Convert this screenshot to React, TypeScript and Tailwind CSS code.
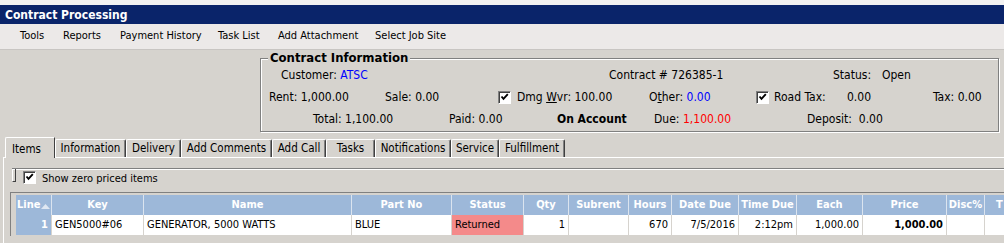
import type { ReactNode } from 'react';

const menu = [
  { label: 'Tools', w: 43 },
  { label: 'Reports', w: 57 },
  { label: 'Payment History', w: 98 },
  { label: 'Task List', w: 60 },
  { label: 'Add Attachment', w: 97 },
  { label: 'Select Job Site', w: 100 },
];

const tabs = [
  { label: 'Items', w: 50 },
  { label: 'Information', w: 71 },
  { label: 'Delivery', w: 55 },
  { label: 'Add Comments', w: 91 },
  { label: 'Add Call', w: 54 },
  { label: 'Tasks', w: 49 },
  { label: 'Notifications', w: 76 },
  { label: 'Service', w: 48 },
  { label: 'Fulfillment', w: 66 },
];

type Col = { label: string; w: number; align: 'left' | 'right' };

const cols: Col[] = [
  { label: 'Line', w: 36, align: 'right' },
  { label: 'Key', w: 92, align: 'left' },
  { label: 'Name', w: 208, align: 'left' },
  { label: 'Part No', w: 100, align: 'left' },
  { label: 'Status', w: 72, align: 'left' },
  { label: 'Qty', w: 45, align: 'right' },
  { label: 'Subrent', w: 60, align: 'right' },
  { label: 'Hours', w: 43, align: 'right' },
  { label: 'Date Due', w: 67, align: 'right' },
  { label: 'Time Due', w: 58, align: 'right' },
  { label: 'Each', w: 66, align: 'right' },
  { label: 'Price', w: 84, align: 'right' },
  { label: 'Disc%', w: 38, align: 'right' },
  { label: 'T', w: 40, align: 'right' },
];

const row = ['1', 'GEN5000#06', 'GENERATOR, 5000 WATTS', 'BLUE', 'Returned', '1', '', '670', '7/5/2016', '2:12pm', '1,000.00', '1,000.00', '', ''];

function CheckBox() {
  return (
    <span className="inline-flex h-[13px] w-[13px] shrink-0 items-center justify-center border border-t-[#808080] border-l-[#808080] border-r-white border-b-white bg-white shadow-[inset_1px_1px_0_#404040]">
      <svg width="9" height="9" viewBox="0 0 9 9">
        <path d="M1.5 3.5 L3.5 5.8 L7.8 1.2" stroke="#000" strokeWidth="1.9" fill="none" />
      </svg>
    </span>
  );
}

function Cell({ w, children, className = '' }: { w: number; children: ReactNode; className?: string }) {
  return (
    <span className={`shrink-0 whitespace-nowrap ${className}`} style={{ width: w }}>
      {children}
    </span>
  );
}

export default function App() {
  return (
    <div className="h-[243px] w-[1004px] overflow-hidden bg-[#d6d3ce] font-['DejaVu_Sans_Condensed','Liberation_Sans',sans-serif] text-black">
      <div className="h-[5px] bg-[#f2f2f2]" />
      {/* title bar */}
      <div className="flex h-[19px] items-center bg-[#0a246a] pl-[5px] text-[12px] font-bold text-white">
        Contract Processing
      </div>
      {/* menu */}
      <div className="flex h-[26px] items-center border-b border-[#c8c5c2] bg-[#ece9e8] pl-[20px] text-[11px]">
        {menu.map((m) => (
          <span key={m.label} className="shrink-0 whitespace-nowrap" style={{ width: m.w }}>
            {m.label}
          </span>
        ))}
      </div>

      {/* contract information group */}
      <div className="relative ml-[260px] mt-[8px] h-[74px] w-[739px] border border-[#808080] pt-[8px] text-[12px] shadow-[inset_1px_1px_0_#fff,1px_1px_0_#fff]">
        <span className="absolute -top-[9px] left-[7px] bg-[#d6d3ce] px-[2px] text-[13px] font-bold leading-[16px]">
          Contract Information
        </span>
        <div className="flex flex-col gap-[6px]">
          <div className="flex h-[16px] items-center pl-[20px] leading-[16px]">
            <Cell w={328}>
              Customer: <span className="text-[#0000ff]">ATSC</span>
            </Cell>
            <Cell w={224}>Contract # 726385-1</Cell>
            <Cell w={49}>Status:</Cell>
            <span>Open</span>
          </div>
          <div className="flex h-[16px] items-center pl-[8px] leading-[16px]">
            <Cell w={116}>Rent: 1,000.00</Cell>
            <Cell w={113}>Sale: 0.00</Cell>
            <CheckBox />
            <Cell w={132} className="ml-[6px]">
              Dmg <span className="underline">W</span>vr: 100.00
            </Cell>
            <Cell w={107}>
              O<span className="underline">t</span>her: <span className="text-[#0000ff]">0.00</span>
            </Cell>
            <CheckBox />
            <Cell w={73} className="ml-[5px]">Road Tax:</Cell>
            <Cell w={86}>0.00</Cell>
            <span>Tax: 0.00</span>
          </div>
          <div className="flex h-[16px] items-center pl-[52px] leading-[16px]">
            <Cell w={136}>Total: 1,100.00</Cell>
            <Cell w={108}>Paid: 0.00</Cell>
            <Cell w={97} className="font-bold">On Account</Cell>
            <Cell w={29}>Due:</Cell>
            <Cell w={124} className="text-[#ff0000]">1,100.00</Cell>
            <span>Deposit:&nbsp; 0.00</span>
          </div>
        </div>
      </div>

      {/* tabs */}
      <div className="ml-[5px] mt-[5px] flex h-[20px] items-end text-[11.5px]">
        {tabs.map((t, i) =>
          i === 0 ? (
            <div
              key={t.label}
              className="relative z-10 -mb-px flex h-[21px] shrink-0 items-start rounded-tl-[2px] border-l border-t border-r border-l-white border-t-white border-r-[#404040] bg-[#d6d3ce] pl-[6px] pt-[3px]"
              style={{ width: t.w }}
            >
              {t.label}
            </div>
          ) : (
            <div
              key={t.label}
              className="flex h-[18px] shrink-0 items-center justify-center rounded-t-[2px] border-l border-t border-r border-l-white border-t-white border-r-[#404040] shadow-[inset_-1px_0_0_#808080]"
              style={{ width: t.w }}
            >
              {t.label}
            </div>
          ),
        )}
      </div>

      {/* tab panel */}
      <div className="ml-[3px] h-[100px] border-l border-t border-white">
        <div className="ml-[8px] mt-[10px] flex h-[22px] items-center border-t border-[#808080] text-[11px] shadow-[inset_0_1px_0_#fff]">
          <span className="h-[13px] w-[4px] self-start border-b border-l border-r border-b-[#404040] border-l-white border-r-[#404040]" />
          <span className="ml-[7px]">
            <CheckBox />
          </span>
          <span className="ml-[6px]">Show zero priced items</span>
        </div>

        <div className="ml-[6px] mt-[2px] overflow-hidden border-l border-t border-[#808080] pl-[5px] pt-[2px] text-[11px]">
          <div className="flex h-[20px] bg-[#9db8d9] font-bold text-white">
            {cols.map((c, i) => (
              <div
                key={c.label}
                className={`flex shrink-0 items-center whitespace-nowrap border-r border-[#dbe4ef] ${
                  i === 0 ? 'justify-start pl-[1px]' : i === 13 ? 'justify-start pl-[11px]' : 'justify-center'
                }`}
                style={{ width: c.w }}
              >
                {c.label}
                {i === 0 && (
                  <svg width="9" height="5" viewBox="0 0 9 5" className="ml-[1px] mt-[2px]">
                    <path d="M4.5 0 L9 5 L0 5 Z" fill="#dfe7f2" />
                  </svg>
                )}
              </div>
            ))}
          </div>
          <div className="flex h-[21px]">
            {cols.map((c, i) => {
              const bg = i === 0 ? 'bg-[#9db8d9] text-white font-bold' : i === 4 ? 'bg-[#f48a8a]' : 'bg-white';
              return (
                <div
                  key={c.label}
                  className={`flex shrink-0 items-center whitespace-nowrap border-b border-r border-[#d6d3ce] px-[3px] ${bg} ${
                    c.align === 'right' ? 'justify-end' : 'justify-start'
                  } ${i === 11 ? 'font-bold' : ''}`}
                  style={{ width: c.w }}
                >
                  {row[i]}
                </div>
              );
            })}
          </div>
        </div>
      </div>
    </div>
  );
}
